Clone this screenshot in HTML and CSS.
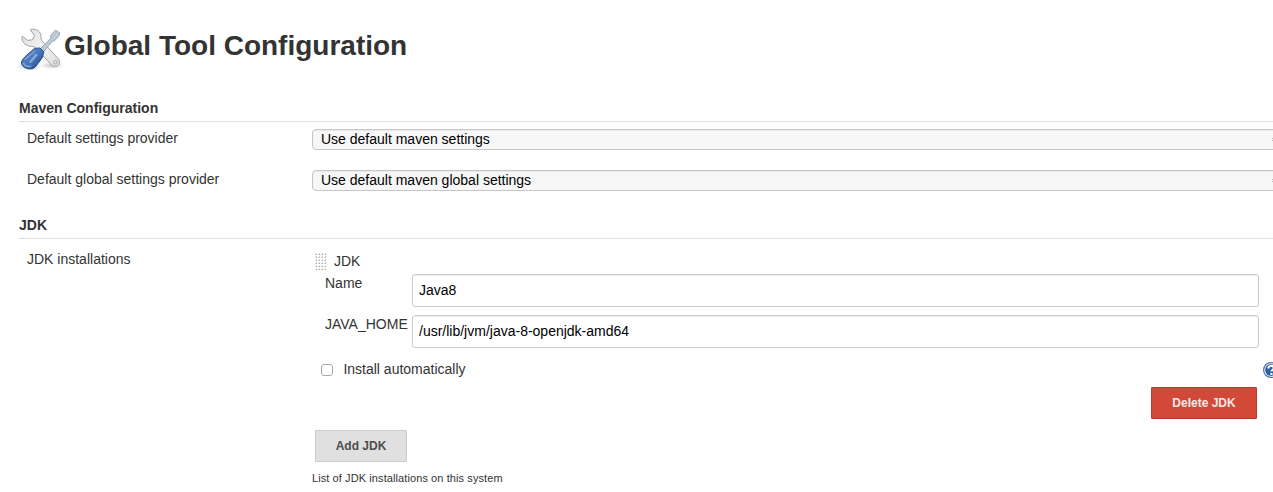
FILE: index.html
```html
<!DOCTYPE html>
<html lang="en">
<head>
<meta charset="utf-8">
<title>Global Tool Configuration</title>
<link rel="stylesheet" href="styles.css">
</head>
<body>
<main class="page">
  <header class="page-header">
    <svg class="tools-icon" viewBox="0 0 48 48" aria-hidden="true">
      <defs>
        <linearGradient id="handle" x1="0" y1="0" x2="1" y2="1">
          <stop offset="0" stop-color="#5d8ccc"/><stop offset=".5" stop-color="#4878bd"/><stop offset="1" stop-color="#1c3f7c"/>
        </linearGradient>
        <linearGradient id="steel" x1="0" y1="0" x2="1" y2="1">
          <stop offset="0" stop-color="#dededc"/><stop offset=".5" stop-color="#f3f3f2"/><stop offset="1" stop-color="#dcdcda"/>
        </linearGradient>
        <radialGradient id="shade"><stop offset="0" stop-color="#000" stop-opacity=".22"/><stop offset="1" stop-color="#000" stop-opacity="0"/></radialGradient>
      </defs>
      <ellipse cx="13" cy="41.5" rx="13" ry="4" fill="url(#shade)"/>
      <ellipse cx="36" cy="40.5" rx="12" ry="4" fill="url(#shade)"/>
      <path d="M14.2 4.8C18 3 24 5.2 24.9 10.2C25.2 12.4 24.8 13.8 25.6 15.4L42.6 34.2C46 39.5 40 43.4 35.8 40.2L19 22.2C16.8 21 14.3 21.7 11.5 20.5C7.3 18.7 4.9 14.7 6.3 11.2L11.6 15.4L16.6 14.8L18.4 10.2Z" fill="url(#steel)" stroke="#a0a19e" stroke-width="1" stroke-linejoin="round"/>
      <circle cx="39.4" cy="37.2" r="1.7" fill="#e6e6e5" stroke="#a0a19e" stroke-width=".9"/>
      <path d="M24 24.2L35.1 13L34.3 11.2L39.3 5.2L43.7 7.7L43.2 10.5L38.5 15.9L36.6 16L27.3 26.9Z" fill="#bdcbd9" stroke="#93a3b3" stroke-width=".9" stroke-linejoin="round"/>
      <path d="M18.2 23.8C20.5 22.4 22 23.8 23.7 22.9L28 26.9C26.6 29.2 27.4 31.5 25.6 33.7L19.2 42C15.5 46.4 4.4 42.9 5.6 36.8C6.4 33 14.8 27 18.2 23.8Z" fill="url(#handle)" stroke="#204a87" stroke-width="1"/>
      <path d="M9.4 34L18.4 26.4" stroke="#a5c3e9" stroke-width="1.8" stroke-linecap="round" opacity=".45"/>
      <path d="M14.4 37L20.4 29.8" stroke="#c2d7f1" stroke-width="2.2" stroke-linecap="round" opacity=".55"/>
      <path d="M7.2 38C9.2 41 12.7 42 15.5 41.2" fill="none" stroke="#7da5d8" stroke-width="1.4"/>
    </svg>
    <h1 class="page-title">Global Tool Configuration</h1>
  </header>

  <section class="section">
    <h2 class="section-title">Maven Configuration</h2>
    <div class="row">
      <div class="label">Default settings provider</div>
      <div class="select"><span>Use default maven settings</span><i class="select-arrow"></i></div>
    </div>
    <div class="row">
      <div class="label">Default global settings provider</div>
      <div class="select"><span>Use default maven global settings</span><i class="select-arrow"></i></div>
    </div>
  </section>

  <section class="section section-jdk">
    <h2 class="section-title">JDK</h2>
    <div class="installations">
      <div class="label label-jdk">JDK installations</div>
      <div class="content">
        <div class="drag-header">
          <svg class="grip" viewBox="0 0 12 18" aria-hidden="true">
            <defs><pattern id="dots" width="3" height="3" patternUnits="userSpaceOnUse">
              <path d="M1 0h1v1H1zM0 1h1v1H0z" fill="#d6d5d1"/><path d="M1 1h1v1H1z" fill="#b5b4af"/>
            </pattern></defs>
            <path d="M0 0h12v18H0z" fill="url(#dots)"/>
          </svg>
          <span>JDK</span>
        </div>
        <div class="field">
          <label class="field-label" for="name">Name</label>
          <input class="text-input" id="name" type="text" value="Java8">
        </div>
        <div class="field">
          <label class="field-label" for="home">JAVA_HOME</label>
          <input class="text-input" id="home" type="text" value="/usr/lib/jvm/java-8-openjdk-amd64">
        </div>
        <div class="check-row">
          <label class="check-label"><input class="checkbox" type="checkbox">Install automatically</label>
          <svg class="help" viewBox="0 0 16 16" aria-hidden="true">
            <circle cx="8" cy="8" r="7.4" fill="#fff" stroke="#4a74a8" stroke-width="1.2"/>
            <circle cx="8" cy="8" r="5.9" fill="#2d5f9e"/>
            <path d="M5.3 6.5C5.2 2.8 10.9 2.9 10.8 6.2C10.7 7.9 8.4 7.8 8.4 9.6M8.4 10.9v2" fill="none" stroke="#fff" stroke-width="2.1"/>
          </svg>
        </div>
        <div class="delete-row"><button class="button button-danger" type="button">Delete JDK</button></div>
        <button class="button button-add" type="button">Add JDK</button>
        <p class="description">List of JDK installations on this system</p>
      </div>
    </div>
  </section>
</main>
</body>
</html>
```
FILE: styles.css
```css
* { box-sizing: border-box; }
body {
  margin: 0;
  overflow: hidden;
  background: #fff;
  color: #333;
  font: 14px/20px "Liberation Sans", Arial, sans-serif;
}
.page { padding-left: 19px; height: 492px; overflow: hidden; }
.page-header { display: flex; height: 92px; padding-top: 25px; margin-left: -3px; }
.tools-icon { flex: none; width: 48px; height: 48px; }
.page-title { margin: 4px 0 0; font-size: 28px; line-height: 34px; white-space: nowrap; }
.section-jdk { margin-top: 5px; }
.section-title {
  height: 30px;
  margin: 0;
  padding-top: 6px;
  border-bottom: 1px solid #ddd;
  font-size: 14px;
  line-height: 20px;
}
.row { display: flex; height: 41px; padding-top: 7px; }
.label { flex: none; width: 293px; margin-top: -1px; padding-left: 8px; }
.select {
  display: flex;
  justify-content: space-between;
  align-items: center;
  flex: none;
  width: 967px;
  height: 21px;
  padding: 0 0 0 8px;
  border: 1px solid #c6c6c6;
  border-radius: 4px;
  background: #f7f7f7;
  box-shadow: inset 0 1px 1px #e9e9e9;
  color: #000;
  line-height: 19px;
}
.select-arrow { width: 6px; height: 3px; border: solid #bbb; border-width: 1px 0; }
.installations { display: flex; padding-top: 12px; }
.label-jdk { margin-top: -2px; }
.content { flex: 1; min-width: 0; }
.drag-header { display: flex; height: 23px; gap: 7px; padding-left: 3px; }
.grip { width: 12px; height: 18px; margin-top: 2px; }
.field { display: flex; height: 41px; padding-left: 13px; }
.field-label { flex: none; width: 87px; margin-top: -1px; }
.text-input {
  width: 847px;
  height: 33px;
  padding: 0 6px 2px;
  border: 1px solid #ccc;
  border-radius: 3px;
  background: #fff;
  box-shadow: inset 0 1px 1px rgba(0, 0, 0, .075);
  color: #000;
  font: inherit;
}
.check-row { display: flex; justify-content: space-between; height: 31px; padding-top: 3px; padding-left: 9px; margin-right: -6px; }
.check-label { display: flex; gap: 10.4px; }
.checkbox {
  appearance: none;
  width: 12px;
  height: 12px;
  margin: 5px 0 0;
  border: 1px solid #aaa;
  border-radius: 3px;
  background: #fff;
}
.help { flex: none; width: 16px; height: 16px; margin-top: 3px; }
.delete-row { display: flex; justify-content: flex-end; height: 43px; padding-right: 16px; }
.button {
  display: block;
  height: 32px;
  padding: 0;
  border: 1px solid;
  border-radius: 1px;
  font: bold 12px/20px "Liberation Sans", Arial, sans-serif;
}
.button-danger { width: 106px; border-color: #b93a2c; background: #d24939; color: #f5e9e7; }
.button-add { width: 92px; margin-left: 3px; border-color: #ccc; background: #e0e0e0; color: #4d4d4d; }
.description { margin: 7px 0 0; font-size: 11px; line-height: 18px; letter-spacing: .09px; }
```
